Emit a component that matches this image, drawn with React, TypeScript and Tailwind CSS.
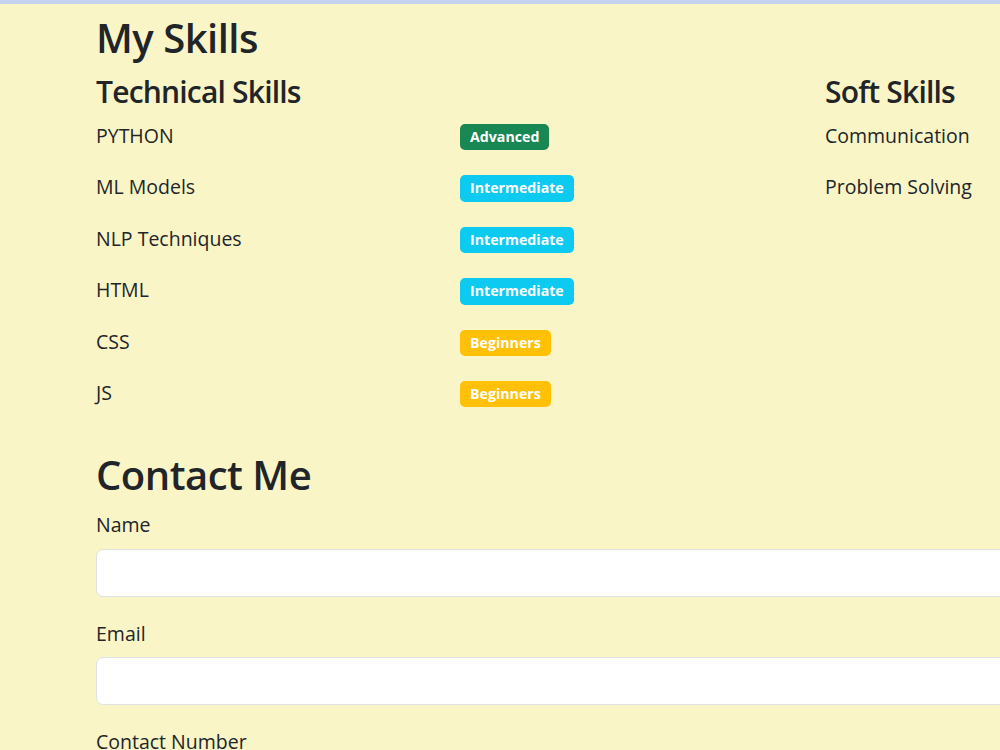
const technicalSkills = [
  { name: "PYTHON", level: "Advanced", tone: "bg-[#198754]" },
  { name: "ML Models", level: "Intermediate", tone: "bg-[#0dcaf0]" },
  { name: "NLP Techniques", level: "Intermediate", tone: "bg-[#0dcaf0]" },
  { name: "HTML", level: "Intermediate", tone: "bg-[#0dcaf0]" },
  { name: "CSS", level: "Beginners", tone: "bg-[#ffc107]" },
  { name: "JS", level: "Beginners", tone: "bg-[#ffc107]" },
];

const softSkills = ["Communication", "Problem Solving"];

const fields = ["Name", "Email", "Contact Number"];

export default function App() {
  return (
    <div
      className="h-[750px] overflow-hidden border-t-4 border-[#c3d3ef] bg-[#faf5c6] text-[#212529]"
      style={{ fontFamily: '"Open Sans", "Noto Sans", sans-serif' }}
    >
      <div className="w-[1200px] pl-[96px]">
        {/* skills */}
        <h1 className="pt-[10px] text-[40px] font-semibold leading-[1.2] tracking-[-0.5px]">My Skills</h1>
        <div className="flex">
          <div className="w-[729px]">
            <h3 className="mt-[12px] text-[30px] font-semibold leading-[1.2] tracking-[-0.8px]">
              Technical Skills
            </h3>
            <div className="mt-[11px] flex flex-col">
              {technicalSkills.map((skill) => (
                <div key={skill.name} className="flex h-[51.4px] items-start">
                  <span className="w-[364px] text-[19.5px] leading-[1.5]">{skill.name}</span>
                  <span
                    className={`${skill.tone} mt-[3px] rounded-[5px] px-[10px] py-[4px] text-[14.2px] font-bold leading-[1.3] text-white`}
                  >
                    {skill.level}
                  </span>
                </div>
              ))}
            </div>
          </div>
          <div className="flex-1">
            <h3 className="mt-[12px] text-[30px] font-semibold leading-[1.2] tracking-[-0.8px]">Soft Skills</h3>
            <div className="mt-[11px] flex flex-col">
              {softSkills.map((skill) => (
                <div key={skill} className="h-[51.4px] text-[19.5px] leading-[1.5]">
                  {skill}
                </div>
              ))}
            </div>
          </div>
        </div>

        {/* contact form */}
        <h1 className="mt-[22px] text-[40px] font-semibold leading-[1.2] tracking-[-0.5px]">Contact Me</h1>
        <form className="mt-[11px] flex w-[1100px] flex-col gap-[22px]">
          {fields.map((field) => (
            <div key={field} className="flex flex-col">
              <label className="text-[19.5px] leading-[1.5]">{field}</label>
              <input
                type="text"
                className="mt-[9px] h-[48px] rounded-[7px] border border-[#dee2e6] bg-white px-3 text-[20px]"
              />
            </div>
          ))}
        </form>
      </div>
    </div>
  );
}
